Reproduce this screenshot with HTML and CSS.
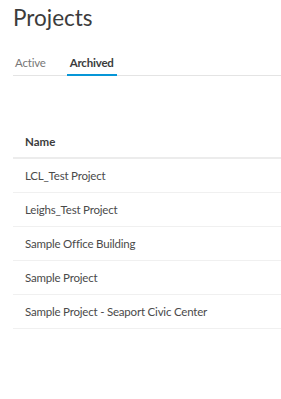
FILE: index.html
```html
<!DOCTYPE html>
<html lang="en">
<head>
  <meta charset="UTF-8">
  <title>Projects</title>
  <link rel="stylesheet" href="styles.css">
</head>
<body>
  <div class="page">
    <h1>Projects</h1>

    <!-- Tabs -->
    <div class="tabs">
      <div class="tab">Active</div>
      <div class="tab active">Archived</div>
    </div>

    <!-- Project list -->
    <div class="table">
      <div class="table-head">Name</div>
      <div class="row">LCL_Test Project</div>
      <div class="row">Leighs_Test Project</div>
      <div class="row">Sample Office Building</div>
      <div class="row">Sample Project</div>
      <div class="row">Sample Project - Seaport Civic Center</div>
    </div>
  </div>
</body>
</html>
```

FILE: styles.css
```css
body {
  margin: 0;
  font-family: Lato, "Noto Sans", sans-serif;
  color: #3c3c3c;
  background: #fff;
}

.page {
  padding: 0 0 0 13px;
}

h1 {
  margin: 0;
  padding-top: 3px;
  font-size: 22.5px;
  font-weight: 400;
  line-height: 30px;
  color: #3c3c3c;
}

.tabs {
  display: flex;
  margin-top: 21px;
  border-bottom: 1px solid #e4e4e4;
}

.tab {
  padding: 0 2px 3px 2px;
  margin-right: 19px;
  font-size: 11.5px;
  letter-spacing: -0.2px;
  line-height: 17px;
  color: #777;
  border-bottom: 2px solid transparent;
  margin-bottom: -1px;
}

.tab.active {
  padding: 0 3px 3px 3px;
  color: #3c3c3c;
  font-weight: 700;
  border-bottom-color: #0696d7; /* brand blue */
}

.table {
  margin-top: 54px;
}

.table-head {
  padding: 0 12px 3px;
  line-height: 24px;
  font-size: 11.5px;
  font-weight: 700;
  border-bottom: 2px solid #ececec;
}

.row {
  padding: 0 12px;
  height: 33px;
  line-height: 33px;
  font-size: 11.5px;
  letter-spacing: -0.2px;
  color: #4a4a4a;
  border-bottom: 1px solid #f0f0f0;
}
```
